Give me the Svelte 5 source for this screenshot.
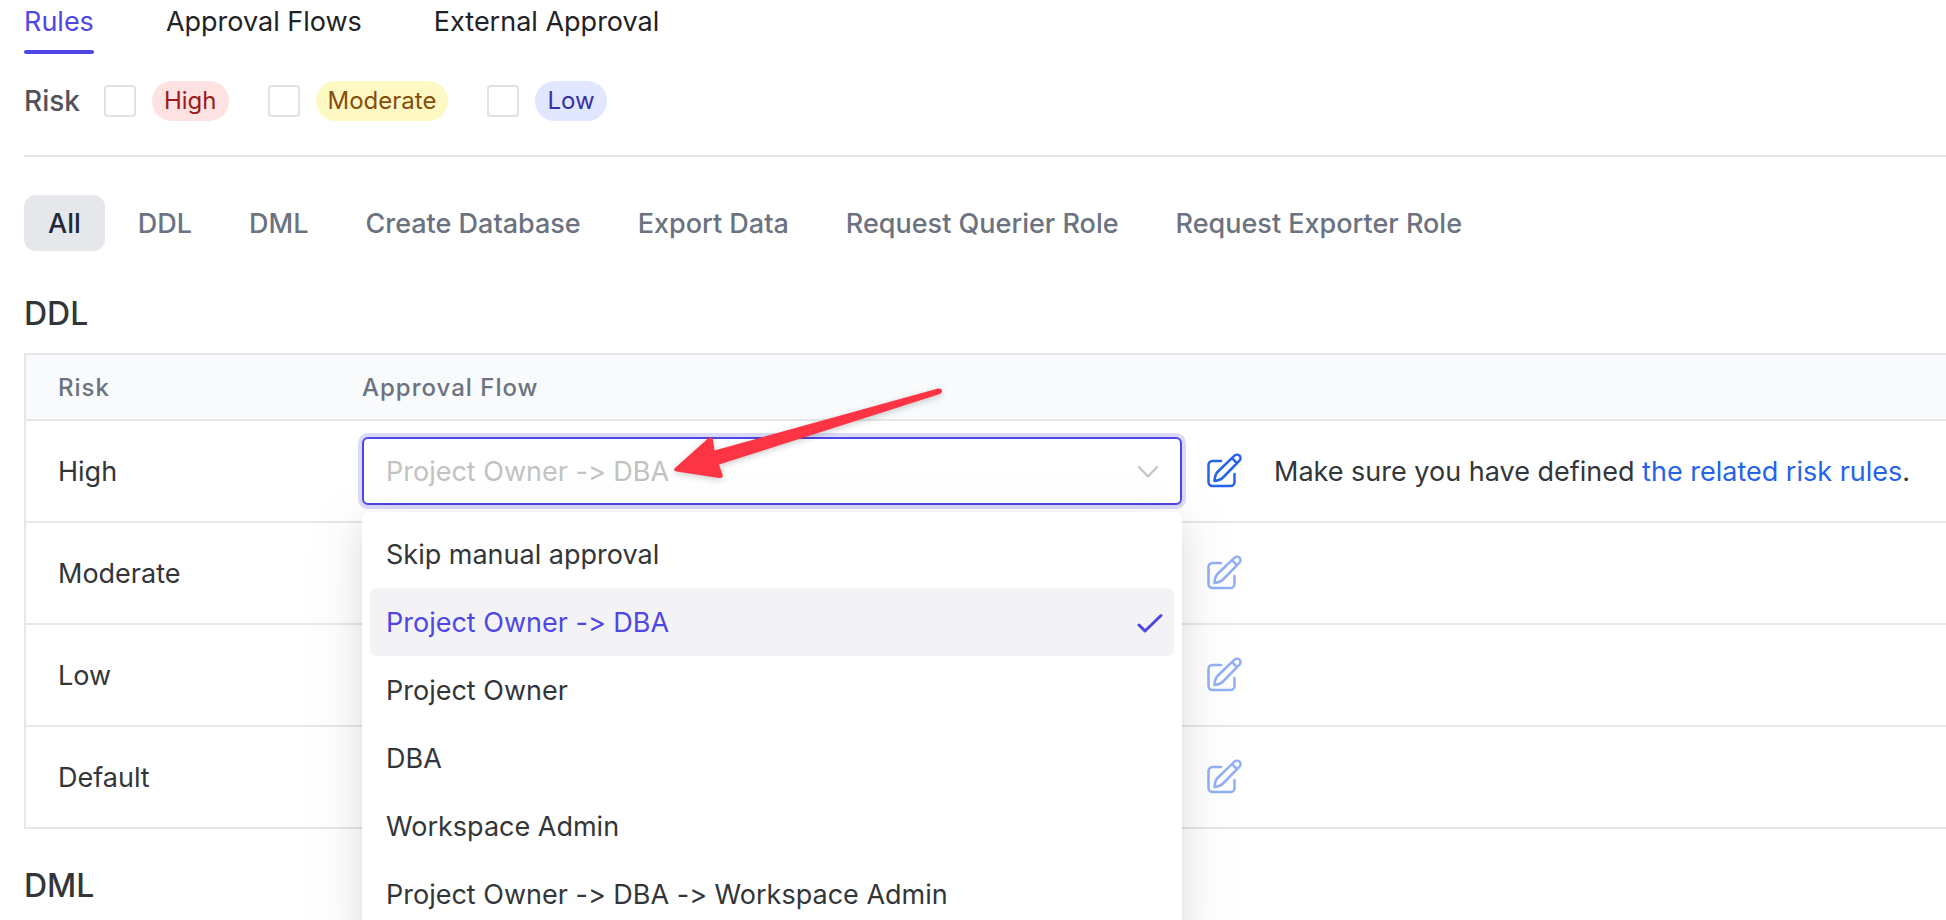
<script lang="ts">
  const tabs = ['Rules', 'Approval Flows', 'External Approval'];
  const risks = [
    { name: 'High', tone: 'high' },
    { name: 'Moderate', tone: 'moderate' },
    { name: 'Low', tone: 'low' },
  ];
  const sources = ['All', 'DDL', 'DML', 'Create Database', 'Export Data', 'Request Querier Role', 'Request Exporter Role'];
  const levels = ['High', 'Moderate', 'Low', 'Default'];
  const flows = [
    'Skip manual approval',
    'Project Owner -> DBA',
    'Project Owner',
    'DBA',
    'Workspace Admin',
    'Project Owner -> DBA -> Workspace Admin',
  ];

  let activeTab = $state('Rules');
  let activeSource = $state('All');
  let openLevel = $state('High');
  let selected = $state('Project Owner -> DBA');
</script>

<main class="page">
  <nav class="tabs" aria-label="Approval settings">
    {#each tabs as tab}
      <button class="tab" class:active={tab === activeTab} onclick={() => (activeTab = tab)}>{tab}</button>
    {/each}
  </nav>

  <div class="filters">
    <span class="filters-title">Risk</span>
    <div class="checks">
      {#each risks as risk}
        <label class="check">
          <input type="checkbox" />
          <span class="badge {risk.tone}">{risk.name}</span>
        </label>
      {/each}
    </div>
  </div>

  <div class="sources">
    {#each sources as source}
      <button class="source" class:active={source === activeSource} onclick={() => (activeSource = source)}>{source}</button>
    {/each}
  </div>

  <h2>DDL</h2>
  <table>
    <thead>
      <tr><th class="risk-col">Risk</th><th class="flow-col">Approval Flow</th><th></th></tr>
    </thead>
    <tbody>
      {#each levels as level}
        <tr>
          <td class="risk-col">{level}</td>
          <td class="flow-col">
            {#if level === openLevel}
              <div class="picker">
                <select aria-label="Approval flow for {level} risk" bind:value={selected}>
                  {#each flows as flow}<option value={flow}>{flow}</option>{/each}
                </select>
                <svg class="chevron" viewBox="0 0 20 12" aria-hidden="true"><path d="M1 1l9 9.500L19 1" /></svg>
                <ul class="menu">
                  {#each flows as flow}
                    <li>
                      <button class="choice" class:chosen={flow === selected} onclick={() => (selected = flow)}>
                        <span>{flow}</span>
                        {#if flow === selected}
                          <svg class="tick" viewBox="0 0 26 20" aria-hidden="true"><path d="M2 12l6 6L24 2.500" /></svg>
                        {/if}
                      </button>
                    </li>
                  {/each}
                </ul>
                <svg class="arrow" viewBox="0 0 280 104" aria-hidden="true">
                  <path d="M12.500 80.500L46 50.500Q50 48 51 52L52.500 62.500L276 .5Q280 0 280 3Q280 5 278 6L57 76.500L60.500 86.500Q61.500 90.500 57 90L14.500 83.500Q11 83 12.500 80.500Z" />
                </svg>
              </div>
            {/if}
          </td>
          <td>
            <div class="actions">
              <button class="edit" disabled={level !== openLevel} aria-label="Edit {level}">
                <svg viewBox="0 0 36 36" aria-hidden="true">
                  <path d="M15 8H6.500A4 4 0 0 0 2.500 12V29A4 4 0 0 0 6.500 33H24.500A4 4 0 0 0 28.500 29V21" />
                  <path d="M8.500 28Q9 21.500 11.500 19L28.500 2.700a3.300 3.300 0 0 1 5 5L16.500 25Q14.500 27 8.500 28zM26 5.200l4.800 4.800" />
                </svg>
              </button>
              {#if level === openLevel}
                <span class="note">Make sure you have defined <a href="#risk-rules">the related risk rules</a>.</span>
              {/if}
            </div>
          </td>
        </tr>
      {/each}
    </tbody>
  </table>
  <h2>DML</h2>
</main>

<style>
  :global(body) {
    margin: 0;
    background: #fff;
  }
  .page {
    box-sizing: border-box;
    height: 100vh;
    overflow: hidden;
    padding-left: 24px;
    font: 27px/40px Inter, sans-serif;
    font-variant-ligatures: no-contextual;
    color: #333639;
  }
  button {
    font: inherit;
    font-variant-ligatures: inherit;
    color: inherit;
    background: none;
    border: 0;
    padding: 0;
    cursor: pointer;
  }
  .tabs {
    display: flex;
    gap: 72px;
    height: 54px;
  }
  .tab {
    box-sizing: border-box;
    padding-bottom: 11px;
    color: #1f2225;
    position: relative;
  }
  .tab.active {
    color: #4f46e5;
  }
  .tab.active::after {
    content: '';
    position: absolute;
    inset: auto 0 0;
    height: 4px;
    border-radius: 2px;
    background: #4f46e5;
  }
  .filters {
    display: flex;
    align-items: center;
    gap: 24px;
    padding: 27px 0 34px;
    border-bottom: 2px solid #e5e7eb;
  }
  .filters-title {
    font-size: 28px;
    font-weight: 500;
    color: #52525b;
  }
  .checks {
    display: flex;
    gap: 39px;
  }
  .check {
    display: flex;
    align-items: center;
    gap: 16px;
  }
  .check input {
    appearance: none;
    box-sizing: border-box;
    width: 32px;
    height: 32px;
    margin: 0;
    border: 2px solid #e0e0e6;
    border-radius: 4px;
    background: #fff;
  }
  .badge {
    padding: 0 12px;
    border-radius: 20px;
    font-size: 24px;
  }
  .high { background: #fee2e2; color: #991b1b; }
  .moderate { background: #fef9c3; color: #854d0e; }
  .low { background: #e0e7ff; color: #3730a3; }
  .sources {
    display: flex;
    gap: 9px;
    padding: 38px 0 41px;
  }
  .source {
    padding: 9px 24px 7px;
    border-radius: 12px;
    font-weight: 450;
    color: #6b7280;
  }
  .source.active {
    background: #e5e7eb;
    color: #1f2937;
  }
  h2 {
    margin: 0;
    font-size: 32px;
    line-height: 44px;
    font-weight: 500;
  }
  table {
    width: 100%;
    margin: 17px 0 35px;
    border-spacing: 0;
    border: solid #e5e7eb;
    border-width: 2px 0 0 2px;
  }
  th {
    box-sizing: border-box;
    height: 66px;
    padding: 2px 0 0;
    background: #f9fafb;
    border-bottom: 2px solid #e5e7eb;
    text-align: left;
    font-size: 24px;
    font-weight: 500;
    letter-spacing: 1px;
    color: #6b7280;
  }
  td {
    box-sizing: border-box;
    height: 102px;
    padding: 0;
    border-bottom: 2px solid #e5e7eb;
  }
  .risk-col {
    width: 336px;
    padding-top: 2px;
    padding-left: 32px;
  }
  .flow-col {
    width: clamp(420px, 43vw, 820px);
  }
  .picker {
    position: relative;
  }
  select {
    appearance: none;
    display: block;
    box-sizing: border-box;
    width: 100%;
    height: 68px;
    margin: 0;
    padding: 2px 60px 0 22px;
    border: 2px solid #4f46e5;
    border-radius: 6px;
    box-shadow: 0 0 0 4px rgba(79, 70, 229, 0.2);
    background: #fff;
    font: inherit;
    font-variant-ligatures: inherit;
    color: #c2c2c2;
    outline: 0;
  }
  svg {
    display: block;
    fill: none;
    stroke: currentColor;
    stroke-linecap: round;
    stroke-linejoin: round;
  }
  .chevron {
    position: absolute;
    right: 24px;
    top: 29px;
    width: 20px;
    height: 12px;
    stroke-width: 2;
    color: #c2c2c2;
  }
  .menu {
    position: absolute;
    z-index: 1;
    top: 75px;
    left: 0;
    right: 0;
    margin: 0;
    padding: 8px;
    list-style: none;
    background: #fff;
    border-radius: 6px;
    box-shadow:
      0 6px 12px -8px rgba(0, 0, 0, 0.12),
      0 12px 32px rgba(0, 0, 0, 0.08),
      0 18px 56px 16px rgba(0, 0, 0, 0.05);
  }
  .choice {
    display: flex;
    align-items: center;
    justify-content: space-between;
    width: 100%;
    height: 68px;
    padding: 2px 11px 0 16px;
    border-radius: 6px;
    text-align: left;
  }
  .chosen {
    background: #f3f3f5;
    color: #4f46e5;
  }
  .tick {
    width: 26px;
    height: 20px;
    stroke-width: 3;
  }
  .arrow {
    position: absolute;
    z-index: 2;
    left: 300px;
    top: -49px;
    width: 280px;
    height: 104px;
    overflow: visible;
    fill: #fc3444;
    stroke: none;
    filter: drop-shadow(0 2px 3px rgba(0, 0, 0, 0.2));
    pointer-events: none;
  }
  .actions {
    display: flex;
    align-items: center;
    gap: 32px;
    padding-left: 24px;
    white-space: nowrap;
  }
  .note {
    padding-top: 2px;
  }
  .edit {
    color: #2563eb;
  }
  .edit:disabled {
    opacity: 0.5;
  }
  .edit svg {
    width: 36px;
    height: 36px;
    stroke-width: 2.5;
  }
  a {
    color: #2563eb;
    text-decoration: none;
  }
</style>
